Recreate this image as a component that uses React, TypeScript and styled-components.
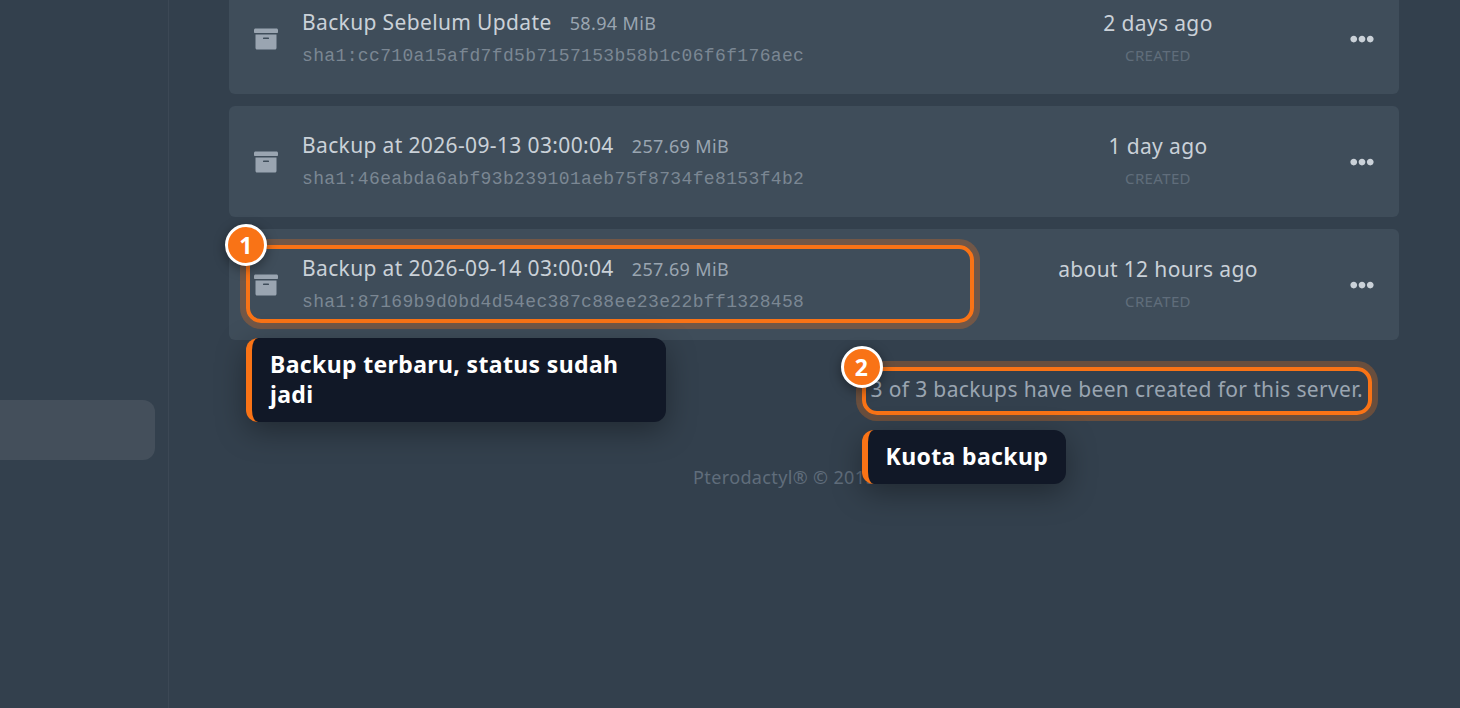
import React from "react";
import styled, { createGlobalStyle } from "styled-components";
import { FaArchive, FaEllipsisH } from "react-icons/fa";

const GlobalStyle = createGlobalStyle`
  *, *::before, *::after { box-sizing: border-box; }
  html { background: #33404d; }
  body {
    margin: 0;
    background: #33404d;
    color: #cad1d8;
    font-family: "Noto Sans", sans-serif;
    font-size: 24px;
    letter-spacing: 0.015em;
  }
  p { margin: 0; }
`;

const Page = styled.div`
  display: flex;
  min-height: 100vh;
  overflow: hidden;
`;

const Sidebar = styled.nav`
  flex: none;
  width: 169px;
  padding: 400px 13px 0 0;
  border-right: 1px solid #3c4855;
`;

const SidebarLink = styled.a`
  display: block;
  height: 60px;
  border-radius: 0 12px 12px 0;
  background: #444f5b;
`;

const Main = styled.main`
  flex: 1;
  min-width: 0;
  padding: 0 61px 0 60px;
`;

const BackupList = styled.div`
  display: flex;
  flex-direction: column;
  gap: 12px;
  margin-top: -17px;
`;

const Row = styled.article`
  display: flex;
  align-items: center;
  height: 111px;
  padding: 0 25px;
  border-radius: 6px;
  background: #3f4d5a;
`;

const Details = styled.div`
  position: relative;
  display: flex;
  flex: 1;
  align-items: center;
  gap: 24px;
  min-width: 0;
`;

const DetailsText = styled.div`
  padding-top: 2px;
`;

const ArchiveIcon = styled(FaArchive)`
  flex: none;
  width: 24px;
  height: 24px;
  color: #9aa5b1;
`;

const NameLine = styled.div`
  display: flex;
  align-items: baseline;
  gap: 18px;
  line-height: 33px;
  white-space: nowrap;
`;

const Name = styled.p`
  font-size: 21px;
`;

const Size = styled.span`
  color: #9aa5b1;
  font-size: 18px;
`;

const Hash = styled.p`
  color: #7b8793;
  font-family: "Liberation Mono", monospace;
  font-size: 18px;
  line-height: 33px;
  white-space: nowrap;
`;

const Created = styled.div`
  flex: none;
  width: 288px;
  text-align: center;
`;

const Ago = styled.p`
  font-size: 21px;
  line-height: 32px;
`;

const CreatedLabel = styled.p`
  color: #606d7b;
  font-size: 15px;
  line-height: 32px;
  text-transform: uppercase;
`;

const MenuButton = styled.button`
  display: flex;
  flex: none;
  margin-left: 48px;
  padding: 0;
  border: 0;
  background: none;
  color: #cad1d8;
  font-size: 24px;
  cursor: pointer;
`;

const QuotaLine = styled.div`
  display: flex;
  justify-content: flex-end;
  margin-top: 33px;
  padding-right: 36px;
`;

const Quota = styled.p`
  position: relative;
  color: #9aa5b1;
  font-size: 21px;
  line-height: 32px;
`;

const Footer = styled.footer`
  margin-top: 59px;
  color: #606d7b;
  font-size: 18px;
  line-height: 27px;
  text-align: center;
`;

const Highlight = styled.span<{ $inset: string }>`
  position: absolute;
  inset: ${({ $inset }) => $inset};
  border: 4px solid #f97316;
  border-radius: 15px;
  box-shadow: 0 0 0 6px rgba(249, 115, 22, 0.28);
`;

const Badge = styled.span`
  position: absolute;
  top: -25px;
  left: -25px;
  display: flex;
  align-items: center;
  justify-content: center;
  width: 42px;
  height: 42px;
  border: 3px solid #fff;
  border-radius: 50%;
  background: #f97316;
  box-shadow: 0 3px 12px rgba(0, 0, 0, 0.4);
  color: #fff;
  font-size: 23px;
  font-weight: 700;
  line-height: 30px;
`;

const Callout = styled.span`
  position: absolute;
  top: calc(100% + 19px);
  left: -4px;
  z-index: 1;
  width: max-content;
  max-width: 420px;
  padding: 11px 18px 13px;
  border-left: 6px solid #f97316;
  border-radius: 12px;
  background: #111827;
  box-shadow: 0 9px 30px rgba(0, 0, 0, 0.35);
  color: #fff;
  font-size: 23px;
  font-weight: 700;
  line-height: 30px;
`;

type AnnotationProps = { step: number; text: string; inset: string };

function Annotation({ step, text, inset }: AnnotationProps) {
  return (
    <Highlight $inset={inset}>
      <Badge>{step}</Badge>
      <Callout>{text}</Callout>
    </Highlight>
  );
}

type Backup = { name: string; size: string; hash: string; ago: string; note?: string };

const backups: Backup[] = [
  {
    name: "Backup Sebelum Update",
    size: "58.94 MiB",
    hash: "sha1:cc710a15afd7fd5b7157153b58b1c06f6f176aec",
    ago: "2 days ago",
  },
  {
    name: "Backup at 2026-09-13 03:00:04",
    size: "257.69 MiB",
    hash: "sha1:46eabda6abf93b239101aeb75f8734fe8153f4b2",
    ago: "1 day ago",
  },
  {
    name: "Backup at 2026-09-14 03:00:04",
    size: "257.69 MiB",
    hash: "sha1:87169b9d0bd4d54ec387c88ee23e22bff1328458",
    ago: "about 12 hours ago",
    note: "Backup terbaru, status sudah jadi",
  },
];

function BackupRow({ backup }: { backup: Backup }) {
  return (
    <Row>
      <Details>
        <ArchiveIcon aria-hidden />
        <DetailsText>
          <NameLine>
            <Name>{backup.name}</Name>
            <Size>{backup.size}</Size>
          </NameLine>
          <Hash>{backup.hash}</Hash>
        </DetailsText>
        {backup.note && <Annotation step={1} text={backup.note} inset="-5px 40px -4px -8px" />}
      </Details>
      <Created>
        <Ago>{backup.ago}</Ago>
        <CreatedLabel>Created</CreatedLabel>
      </Created>
      <MenuButton type="button" aria-label="Backup actions">
        <FaEllipsisH aria-hidden />
      </MenuButton>
    </Row>
  );
}

export default function App() {
  return (
    <Page>
      <GlobalStyle />
      <Sidebar aria-label="Server">
        <SidebarLink href="#backups" aria-label="Backups" />
      </Sidebar>
      <Main>
        <BackupList>
          {backups.map((backup) => (
            <BackupRow key={backup.hash} backup={backup} />
          ))}
        </BackupList>
        <QuotaLine>
          <Quota>
            3 of 3 backups have been created for this server.
            <Annotation step={2} text="Kuota backup" inset="-6px -9px -10px -9px" />
          </Quota>
        </QuotaLine>
        <Footer>Pterodactyl® © 2015 - 2026</Footer>
      </Main>
    </Page>
  );
}
